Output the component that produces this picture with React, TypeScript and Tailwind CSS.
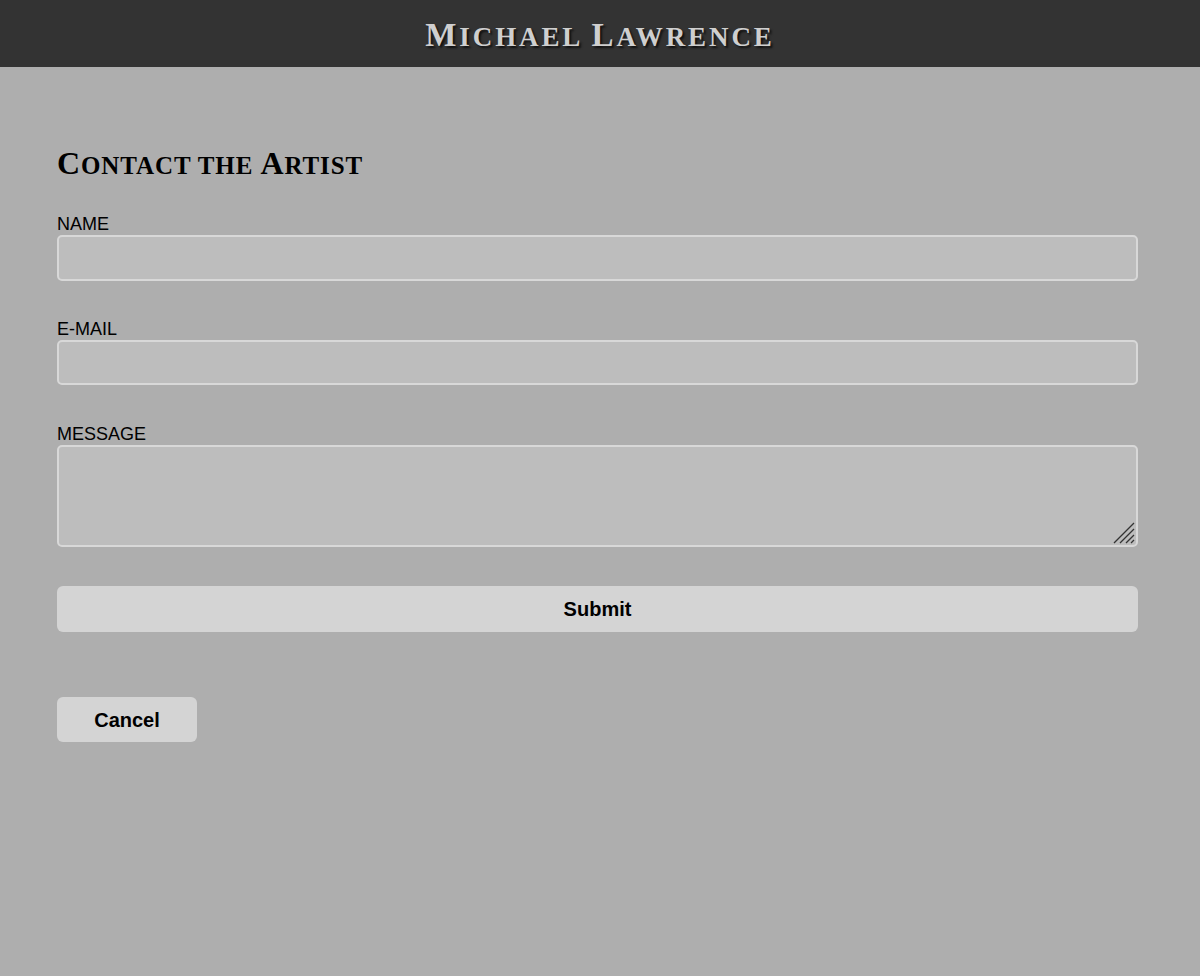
export default function App() {
  const labelCls =
    "block text-[18px] leading-[22px] text-black font-['Liberation_Sans',Arial,sans-serif]";
  const fieldCls =
    "block w-full rounded-[5px] border-2 border-[#d8d8d8] bg-[#bdbdbd] outline-none";
  const serif = "font-['Liberation_Serif','Times_New_Roman',serif] font-bold";

  return (
    <div className="min-h-[976px] bg-[#aeaeae] font-['Liberation_Sans',Arial,sans-serif]">
      {/* Header */}
      <header className="h-[67px] bg-[#333333] flex items-center justify-center pt-[4px]">
        <h1 className={`${serif} leading-none text-[#cfcfcf] uppercase tracking-[2.9px] [text-shadow:2px_2px_2px_#111]`}>
          <span className="text-[33px]">M</span>
          <span className="text-[27px]">ichael </span>
          <span className="text-[33px]">L</span>
          <span className="text-[27px]">awrence</span>
        </h1>
      </header>

      {/* Contact form */}
      <main className="px-[57px] pt-[81px]">
        <h2 className={`${serif} leading-[30px] text-black uppercase tracking-[0.9px]`}>
          <span className="text-[32px]">C</span>
          <span className="text-[25px]">ontact the </span>
          <span className="text-[32px]">A</span>
          <span className="text-[25px]">rtist</span>
        </h2>

        <form className="mt-[29px] mr-[5px]" onSubmit={(e) => e.preventDefault()}>
          <label className={labelCls}>NAME</label>
          <input type="text" className={`${fieldCls} h-[46px]`} />

          <label className={`${labelCls} mt-[37px]`}>E-MAIL</label>
          <input type="email" className={`${fieldCls} h-[45px]`} />

          <label className={`${labelCls} mt-[38px]`}>MESSAGE</label>
          <div className="relative">
            <textarea className={`${fieldCls} h-[102px] resize-none`} />
            {/* resize grip */}
            <svg
              className="absolute right-[3px] bottom-[3px] pointer-events-none"
              width="22"
              height="22"
              viewBox="0 0 22 22"
            >
              <path
                d="M1 21 L21 1 M7 21 L21 7 M13 21 L21 13 M18 21 L21 18"
                stroke="#333"
                strokeWidth="1.3"
              />
            </svg>
          </div>

          <button
            type="submit"
            className="mt-[39px] block w-full h-[46px] rounded-[6px] bg-[#d4d4d4] text-[20px] font-bold text-black"
          >
            Submit
          </button>
        </form>

        <button
          type="button"
          className="mt-[65px] block w-[140px] h-[45px] rounded-[6px] bg-[#d4d4d4] text-[20px] font-bold text-black"
        >
          Cancel
        </button>
      </main>
    </div>
  );
}
